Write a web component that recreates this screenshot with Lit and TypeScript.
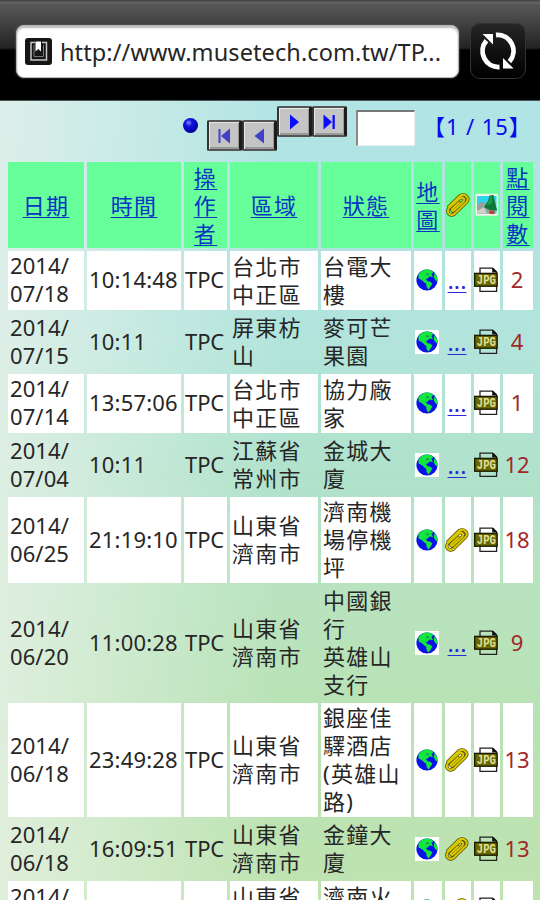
import { LitElement, html, css, svg } from "lit";
import { customElement } from "lit/decorators.js";
import { classMap } from "lit/directives/class-map.js";

interface Row {
  date: string[];
  time: string;
  area: string[];
  place: string[];
  clip: boolean;
  hits: string;
}

const ROWS: Row[] = [
  { date: ["2014/", "07/18"], time: "10:14:48", area: ["台北市", "中正區"], place: ["台電大", "樓"], clip: false, hits: "2" },
  { date: ["2014/", "07/15"], time: "10:11", area: ["屏東枋", "山"], place: ["麥可芒", "果園"], clip: false, hits: "4" },
  { date: ["2014/", "07/14"], time: "13:57:06", area: ["台北市", "中正區"], place: ["協力廠", "家"], clip: false, hits: "1" },
  { date: ["2014/", "07/04"], time: "10:11", area: ["江蘇省", "常州市"], place: ["金城大", "廈"], clip: false, hits: "12" },
  { date: ["2014/", "06/25"], time: "21:19:10", area: ["山東省", "濟南市"], place: ["濟南機", "場停機", "坪"], clip: true, hits: "18" },
  { date: ["2014/", "06/20"], time: "11:00:28", area: ["山東省", "濟南市"], place: ["中國銀", "行", "英雄山", "支行"], clip: false, hits: "9" },
  { date: ["2014/", "06/18"], time: "23:49:28", area: ["山東省", "濟南市"], place: ["銀座佳", "驛酒店", "(英雄山", "路)"], clip: true, hits: "13" },
  { date: ["2014/", "06/18"], time: "16:09:51", area: ["山東省", "濟南市"], place: ["金鐘大", "廈"], clip: true, hits: "13" },
  { date: ["2014/"], time: "", area: ["山東省"], place: ["濟南火"], clip: true, hits: "" },
];

const globe = html`<svg class="globe" viewBox="0 0 24 24" width="24" height="24">
  <rect width="24" height="24" fill="#fff" />
  <circle cx="12" cy="12" r="10.6" fill="#0a12e8" />
  <path d="M3.4 6.6 L6 3.4 L10 1.6 L14.5 1.8 L18.5 4 L16.4 6 L18 9 L14.4 8.4 L12.5 10.8 L10.6 10.8 L13 13.8 L10.5 15.6 L7.6 12.8 L5.6 11.6 L3.6 10.4 Z" fill="#12e83a" />
  <path d="M19.4 5 L22.2 9.2 L22.4 13.4 L20.6 12.4 L18.8 9.6 Z M11 14.2 L14.5 13.2 L17.4 15.6 L15.6 18.4 L13.6 21.6 L11.6 19 Z" fill="#12e83a" />
  <path d="M10.4 5.8 L13 5 L14.8 6.2 L12 7.8 Z" fill="#10a070" />
</svg>`;

const clip = html`<svg class="clip" viewBox="0 0 24 24" width="24" height="24" fill="none" stroke-linecap="round" stroke-linejoin="round">
  <path d="M3 13.5 L14 2.8 Q18 0.8 20.5 3.4 Q23 6 20.6 9 L8.4 21 Q5 23 2.6 20.6 Q0.8 18 3 15 L13.6 5.4 Q16.6 3.6 18 5.8 Q18.8 7.4 17 9 L8 17.6 Q6 18.6 5.8 16.6 L13 9.6" stroke="#4a4400" stroke-width="3.4" />
  <path d="M3 13.5 L14 2.8 Q18 0.8 20.5 3.4 Q23 6 20.6 9 L8.4 21 Q5 23 2.6 20.6 Q0.8 18 3 15 L13.6 5.4 Q16.6 3.6 18 5.8 Q18.8 7.4 17 9 L8 17.6 Q6 18.6 5.8 16.6 L13 9.6" stroke="#d8c800" stroke-width="2.1" />
</svg>`;

const jpg = html`<svg class="jpg" viewBox="0 0 24 26" width="24" height="26">
  <path d="M6 6 V1.2 H18.5 L22.6 5.2 V24.4 H6 V19" fill="none" stroke="#222" stroke-width="1.3" />
  <path d="M18.2 1 V5.6 H23 V4.6 L19.4 1 Z" fill="#111" />
  <rect x="0.7" y="6.4" width="22.4" height="12.8" fill="#686800" stroke="#1c1c00" stroke-width="1.4" />
  <text x="2.8" y="17" font-family="Liberation Mono" font-weight="bold" font-size="12" fill="#e0e09a" textLength="19" lengthAdjust="spacingAndGlyphs">JPG</text>
</svg>`;

const picture = html`<svg viewBox="0 0 24 24" width="24" height="24">
  <rect x="0.5" y="0.8" width="22.6" height="22" rx="1.5" fill="#f4f0e8" />
  <rect x="2" y="3" width="19.5" height="17.6" fill="#28d4ee" />
  <path d="M2 12 L7 8.4 L14 13 V20.6 H2 Z" fill="#9a9fa2" />
  <path d="M2 18 L9 14 L12 20.6 H2 Z" fill="#d0cfc8" />
  <path d="M14.6 2.4 L18.6 2 L19.6 8 L22.2 17.4 L14.8 17 L9 14.2 L13 8 Z" fill="#0c7838" />
  <path d="M15 4 L17 3 L17 10 L12 13 Z" fill="#229c40" />
  <rect x="14.5" y="17.4" width="5" height="3.6" fill="#c43c30" />
</svg>`;

const arrow = (d: string, bar: string) =>
  html`<svg viewBox="0 0 18 18" width="18" height="18">${svg`<path d=${d} /><path d=${bar} />`}</svg>`;

@customElement("app-root")
export class AppRoot extends LitElement {
  static styles = css`
    :host {
      display: flex;
      flex-direction: column;
      width: 540px;
      height: 900px;
      overflow: hidden;
      color: #262626;
      font-family: "Noto Sans", "Noto Sans CJK TC", sans-serif;
      font-size: 22px;
    }
    .chrome {
      box-sizing: border-box;
      flex: none;
      height: 101px;
      display: flex;
      align-items: flex-start;
      padding: 25px 13px 0 16px;
      gap: 11px;
      background: linear-gradient(#444 0, #4a4a4a 1px, #5c5c5c 2px, #6a6a6a 3px, #585858 4px, #515151 10px, #232323 48px, #000 50px);
      border-bottom: 1px solid #4b5658;
    }
    .address {
      box-sizing: border-box;
      flex: none;
      width: 443px;
      height: 53px;
      display: flex;
      align-items: center;
      gap: 8px;
      padding-left: 8px;
      border-radius: 8px;
      background: #fff;
      border: 1px solid #b5b5b5;
      box-shadow: inset 0 2px 2px #bbb, 0 0 2px #777;
    }
    .bookmark { display: block; flex: none; }
    .url {
      font-size: 23.5px;
      line-height: 30px;
      letter-spacing: 0.1px;
      white-space: nowrap;
    }
    .reload {
      box-sizing: border-box;
      flex: none;
      width: 56px;
      height: 56px;
      margin-top: -2px;
      border: 1px solid #333;
      border-radius: 10px;
      background: linear-gradient(#262626, #111 50%, #000);
      display: flex;
      align-items: center;
      justify-content: center;
    }
    .page {
      flex: 1;
      min-height: 0;
      overflow: hidden;
      background:
        linear-gradient(90deg, rgba(238, 243, 236, 0.72), rgba(232, 244, 234, 0.4) 25%, rgba(220, 240, 230, 0) 52%),
        linear-gradient(#b1e4e4 0, #b0e3e2 14%, #b2e4dc 30%, #b0e2cb 47%, #b8e3bf 60%, #b9e2b4 78%, #bfe3b0 100%);
    }
    .nav {
      height: 61px;
      display: flex;
      align-items: flex-start;
      padding-left: 183px;
    }
    .dot {
      width: 15px;
      height: 15px;
      margin: 17px 9px 0 0;
      border-radius: 50%;
      background: radial-gradient(circle at 38% 32%, #7c8cff 0, #1414e0 25%, #0000b0 60%, #00005c 100%);
    }
    .btn {
      box-sizing: border-box;
      width: 35px;
      height: 31px;
      margin-top: 5px;
      padding: 0;
      display: flex;
      align-items: center;
      justify-content: center;
      border: 2px solid #444;
      border-width: 2px 3px 2px 2px;
      border-radius: 2px;
      border-color: #555 #1c1c1c #555 #333;
      background: #c4c4c4;
      box-shadow: inset 1px 1px 0 #e6e6e6, inset -1px -2px 0 #999;
      fill: #0c0cff;
    }
    .btn.off { margin-top: 19px; fill: #4040c8; }
    .goto {
      box-sizing: border-box;
      width: 59px;
      height: 36px;
      margin: 9px 0 0 9px;
      background: #fff;
      border: 1px solid #e8f0f0;
      border-top: 2px solid #777;
      border-left: 2px solid #888;
    }
    .count {
      margin: 10px 0 0 8px;
      color: #0a0af0;
      line-height: 30px;
      letter-spacing: 0.9px;
      white-space: pre;
    }
    .grid {
      display: grid;
      grid-template-columns: 76px 94px 43px 88px 90px 28px 26px 26px 30px;
      grid-template-rows: 86px 59px 58px 59px 58px 86px 114px 114px 58px 59px;
      gap: 3px;
      padding-left: 8px;
    }
    .cell {
      box-sizing: border-box;
      display: flex;
      flex-direction: column;
      justify-content: center;
      padding-left: 2px;
      padding-bottom: 2px;
      line-height: 28px;
      white-space: nowrap;
    }
    .cell.white { background: #fff; }
    .cell.cjk { letter-spacing: 1.3px; }
    .cell.date { padding-bottom: 3px; letter-spacing: 0.1px; }
    .cell.time { padding-bottom: 3px; letter-spacing: 0.2px; }
    .cell.op { padding-left: 1px; padding-bottom: 3px; letter-spacing: -0.1px; }
    .cell.mid { padding-left: 0; align-items: center; }
    .cell.icon { padding-bottom: 1px; padding-right: 2px; }
    .cell.red { color: #a02828; padding-bottom: 3px; padding-right: 2px; }
    .cell svg { display: block; flex: none; }
    .cell.top { justify-content: flex-start; padding-top: 1px; }
    .cell.head { background: #66ff99; padding-bottom: 1px; }
    .link {
      color: #0a35c4;
      text-decoration: underline;
      text-decoration-thickness: 1px;
      text-underline-offset: 3px;
    }
    .dots {
      color: #2a2ad8;
      font-size: 23.5px;
      text-decoration: underline;
      text-decoration-thickness: 1px;
      text-underline-offset: 3px;
      line-height: 28px;
    }
  `;

  private head(lines: string[]) {
    return html`<div class="cell head mid cjk">${lines.map((l) => html`<span class="link">${l}</span>`)}</div>`;
  }

  private cell(kind: string, white: boolean, content: unknown) {
    const classes = { cell: true, white, ...Object.fromEntries(kind.split(" ").map((k) => [k, true])) };
    return html`<div class=${classMap(classes)}>${content}</div>`;
  }

  private row(r: Row, i: number) {
    const w = i % 2 === 0;
    const top = r.time ? "" : " top";
    const lines = (a: string[]) => a.map((l) => html`<span>${l}</span>`);
    return html`
      ${this.cell("date" + top, w, lines(r.date))}
      ${this.cell("time", w, r.time)}
      ${this.cell("op", w, r.time ? "TPC" : "")}
      ${this.cell("cjk" + top, w, lines(r.area))}
      ${this.cell("cjk" + top, w, lines(r.place))}
      ${this.cell("mid icon", w, globe)}
      ${this.cell("mid icon", w, r.clip ? clip : html`<span class="dots">...</span>`)}
      ${this.cell("mid icon", w, jpg)}
      ${this.cell("mid red", w, r.hits)}
    `;
  }

  render() {
    return html`
      <div class="chrome">
        <div class="address">
          <svg class="bookmark" viewBox="0 0 27 27" width="27" height="27">
            <rect width="27" height="27" rx="3" fill="#161616" />
            <path d="M10 4.5 H6 V22 H21.5 V4.5 H17" fill="none" stroke="#c8c8c8" stroke-width="1.5" />
            <path d="M9 7 V18.5 H18.5 V7" fill="none" stroke="#777" stroke-width="1" />
            <path d="M10.5 3.5 H16 V13.5 L13.2 11 L10.5 13.5 Z" fill="#fff" />
          </svg>
          <span class="url">http://www.musetech.com.tw/TP...</span>
        </div>
        <div class="reload">
          <svg viewBox="0 0 40 40" width="40" height="40">
            <path d="M21.5 36 A16 16 0 0 1 8.4 9.6" fill="none" stroke="#fff" stroke-width="4.8" />
            <path d="M18 4 A16 16 0 0 1 31.4 30.6" fill="none" stroke="#fff" stroke-width="4.8" />
            <path d="M4.6 3 H15 V13.4 Z" fill="#fff" />
            <path d="M25 27 V37.6 H35.6 Z" fill="#fff" />
          </svg>
        </div>
      </div>
      <div class="page">
        <div class="nav">
          <span class="dot"></span>
          <button class="btn off">${arrow("M15 1.5 V16.5 L6 9 Z", "M3.5 2 H5.5 V16 H3.5 Z")}</button>
          <button class="btn off">${arrow("M14 1.5 V16.5 L4.5 9 Z", "")}</button>
          <button class="btn">${arrow("M5 1.5 V16.5 L14 9 Z", "")}</button>
          <button class="btn">${arrow("M3.5 1.5 V16.5 L12 9 Z", "M12.5 2 H14.8 V16 H12.5 Z")}</button>
          <span class="goto"></span>
          <span class="count">【1 / 15】</span>
        </div>
        <div class="grid">
          ${this.head(["日期"])} ${this.head(["時間"])} ${this.head(["操", "作", "者"])}
          ${this.head(["區域"])} ${this.head(["狀態"])} ${this.head(["地", "圖"])}
          <div class="cell head mid">${clip}</div>
          <div class="cell head mid">${picture}</div>
          ${this.head(["點", "閱", "數"])}
          ${ROWS.map((r, i) => this.row(r, i))}
        </div>
      </div>
    `;
  }
}
